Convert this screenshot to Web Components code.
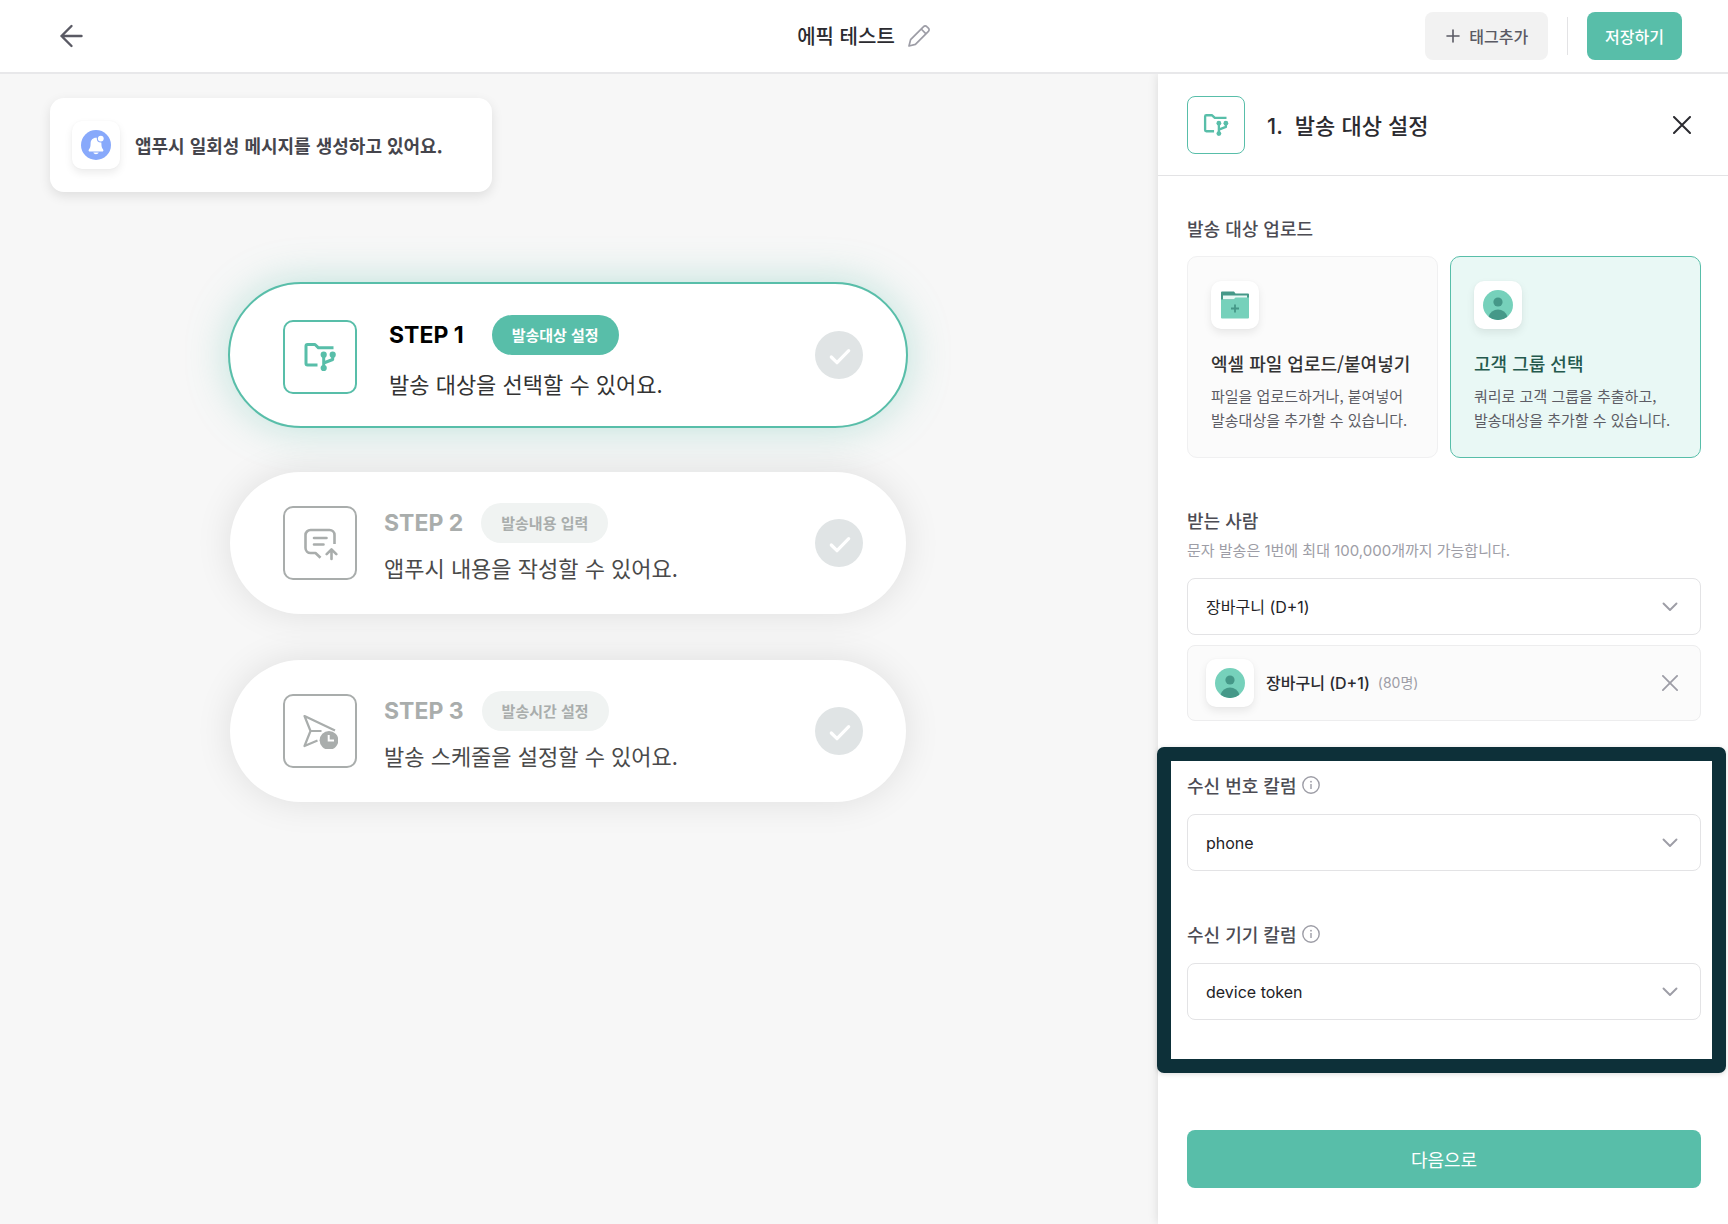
<!DOCTYPE html>
<html lang="ko">
<head>
<meta charset="utf-8">
<title>에픽 테스트</title>
<style>
  html, body {
    margin: 0;
    height: 100%;
  }
  body {
    --green: #58bea9;
    --green-dark: #24594d;
    --line: #e3e3e5;
    --ko: "Noto Sans CJK KR", "Noto Sans", sans-serif;
    --mix: Inter, "Noto Sans CJK KR", sans-serif;
    font-family: var(--ko);
    color: #2b2b30;
    background: #f7f7f7;
  }
</style>
</head>
<body>
<campaign-page></campaign-page>

<script>
const icons = {
  back: ["0 0 28 28", `<path d="M23.500 14H3.500M13.500 4 3.500 14l10 10" fill="none" stroke="currentColor" stroke-width="2.400" stroke-linecap="round" stroke-linejoin="round"/>`],
  pencil: ["0 0 24 24", `<g fill="none" stroke="currentColor" stroke-width="1.700" stroke-linejoin="round"><path d="M2 22 3.600 15.600 16.600 2.600a2.200 2.200 0 0 1 3.200 0l1.600 1.600a2.200 2.200 0 0 1 0 3.200L8.400 20.400Z"/><path d="m14.200 5 4.800 4.800"/></g>`],
  plus: ["0 0 14 14", `<path d="M7 1v12M1 7h12" stroke="currentColor" stroke-width="1.600" stroke-linecap="round"/>`],
  close: ["0 0 18 18", `<path d="m1 1 16 16M17 1 1 17" stroke="currentColor" stroke-width="2" stroke-linecap="round"/>`],
  chevron: ["0 0 16 16", `<path d="m1.500 4.500 6.500 6.500 6.500-6.500" fill="none" stroke="currentColor" stroke-width="1.900" stroke-linecap="round" stroke-linejoin="round"/>`],
  info: ["0 0 18 18", `<circle cx="9" cy="9" r="8.200" fill="none" stroke="currentColor" stroke-width="1.400"/><path d="M9 8v5" stroke="currentColor" stroke-width="1.400"/><circle cx="9" cy="5.700" r=".9" fill="currentColor"/>`],
  target: ["0 0 36 36", `<g fill="none" stroke="currentColor" stroke-width="3" stroke-linejoin="round"><path d="M15.500 26H5.500A1.500 1.500 0 0 1 4 24.500V7a1.500 1.500 0 0 1 1.500-1.500H13l3.500 3.300h15" stroke-linecap="butt"/><path d="M21.700 15.700V29M30.700 15.700v4.800l-9 3.500"/></g><g fill="currentColor"><circle cx="21.700" cy="15.700" r="3.100"/><circle cx="30.700" cy="15.700" r="3.100"/><circle cx="21.700" cy="29" r="3.100"/></g>`],
  message: ["0 0 36 36", `<g fill="none" stroke="currentColor" stroke-width="2.600" stroke-linecap="round" stroke-linejoin="round"><path d="M32.500 19V10a5 5 0 0 0-5-5h-19a5 5 0 0 0-5 5v13a5 5 0 0 0 5 5h5l5 4.800" stroke-linecap="butt"/><path d="M12 13h12.500M12 19.500h9.500M29.500 34V25M24.700 29.200l4.800-4.800 4.800 4.800"/></g>`],
  schedule: ["0 0 36 36", `<path d="M15.500 27.500 2.500 33l6-15-6-15L33 17.500M8.500 18h11" fill="none" stroke="currentColor" stroke-width="2.200" stroke-linejoin="round"/><circle cx="27" cy="27.300" r="9.400" fill="currentColor"/><path d="M26.700 22v5.600H32" fill="none" stroke="#fff" stroke-width="2"/>`],
  check: ["0 0 48 48", `<circle cx="24" cy="24" r="24" fill="#e0e4e5"/><path d="m16.300 26 5.700 5.700 11.700-12" fill="none" stroke="#fff" stroke-width="3.200" stroke-linecap="round" stroke-linejoin="round"/>`],
  bell: ["0 0 30 30", `<circle cx="15" cy="15" r="15" fill="#88a9fb"/><path d="M15 7.700c-3.200 0-5.400 2.300-5.400 5.600 0 3-.4 4.600-1.700 6.200-.8 1 0 2.100 1 2.100h12.200c1 0 1.800-1.100 1-2.100-1.300-1.600-1.700-3.200-1.700-6.200 0-3.300-2.200-5.600-5.400-5.600Z" fill="#fff"/><path d="M12.300 22.500h5.400c-.5 1.100-1.500 1.700-2.700 1.700s-2.200-.6-2.700-1.700Z" fill="#fff"/><circle cx="19.800" cy="8.600" r="4" fill="#88a9fb"/><circle cx="19.800" cy="8.600" r="2.900" fill="#fff"/>`],
  folder: ["0 0 28 28", `<path d="M0 1.500A1 1 0 0 1 1 .5h12l1.500 2H27a1 1 0 0 1 1 1V9H0Z" fill="#459888"/><path d="M2 4.500h24v4H2Z" fill="#e9f8f5"/><path d="M0 8.500h12.500l2-2H28v20a1 1 0 0 1-1 1H1a1 1 0 0 1-1-1Z" fill="#76d1bb"/><path d="M14 13.500v8M10 17.500h8" stroke="#459888" stroke-width="1.800"/>`],
  person: ["0 0 30 30", `<circle cx="15" cy="15" r="15" fill="#76d1bb"/><circle cx="15" cy="12" r="4.600" fill="#459888"/><path d="M5.600 26.700a9.700 9.700 0 0 1 18.800 0A15 15 0 0 1 5.600 26.700Z" fill="#459888"/>`],
};

function define(name, markup) {
  customElements.define(name, class extends HTMLElement {
    constructor() {
      super();
      this.attachShadow({ mode: "open" });
    }

    connectedCallback() {
      if (this.shadowRoot.childNodes.length) return;
      this.shadowRoot.innerHTML = "<style>* { box-sizing: border-box; } button { font: inherit; color: inherit; margin: 0; border: 0; cursor: pointer; }</style>" + markup(this);
    }
  });
}

const attr = (el, name) => el.getAttribute(name) || "";

// <ui-icon name="" size="">
define("ui-icon", (el) => {
  const [viewBox, body] = icons[attr(el, "name")];
  const size = attr(el, "size") || 24;
  return `
    <style>
      :host { display: inline-flex; flex: none; }
    </style>
    <svg viewBox="${viewBox}" width="${size}" height="${size}" aria-hidden="true">${body}</svg>`;
});

// white raised square around a coloured icon
define("icon-tile", (el) => `
  <style>
    :host {
      display: inline-flex;
      flex: none;
      align-items: center;
      justify-content: center;
      width: 48px;
      height: 48px;
      border-radius: 10px;
      background: #fff;
      box-shadow: 0 4px 8px rgba(0, 0, 0, 0.08), 0 0 2px rgba(0, 0, 0, 0.04);
    }
  </style>
  <ui-icon name="${attr(el, "name")}" size="${attr(el, "size") || 30}"></ui-icon>`);

define("page-header", () => `
  <style>
    :host {
      display: grid;
      grid-template-columns: 1fr auto 1fr;
      align-items: center;
      height: 74px;
      padding: 0 46px;
      background: #fff;
      border-bottom: 2px solid #e8e8ea;
      box-sizing: border-box;
      position: relative;
      z-index: 1;
    }
    button { display: inline-flex; align-items: center; background: none; padding: 0; }
    .back { justify-self: start; padding: 12px; color: #5a5a64; }
    .title { display: flex; align-items: center; gap: 12px; }
    h1 { margin: 0; font-size: 20px; line-height: 28px; font-weight: 500; }
    .edit { color: #9d9da6; }
    .actions { display: flex; align-items: center; gap: 19px; justify-self: end; }
    .actions button {
      height: 48px;
      border-radius: 8px;
      font-size: 16px;
      font-weight: 500;
      padding: 0 18px;
    }
    .actions .tag { background: #f2f2f2; color: #5a5a64; gap: 9px; padding: 0 20px 0 21px; }
    .actions .save { background: var(--green); color: #fff; }
    .rule { width: 1px; height: 38px; background: var(--line); }
  </style>
  <button class="back" aria-label="뒤로"><ui-icon name="back" size="28"></ui-icon></button>
  <div class="title">
    <h1><slot></slot></h1>
    <button class="edit" aria-label="이름 수정"><ui-icon name="pencil" size="24"></ui-icon></button>
  </div>
  <div class="actions">
    <button class="tag"><ui-icon name="plus" size="14"></ui-icon>태그추가</button>
    <span class="rule"></span>
    <button class="save">저장하기</button>
  </div>`);

define("notice-card", () => `
  <style>
    :host {
      display: flex;
      align-items: center;
      gap: 15px;
      width: 442px;
      max-width: 100%;
      padding: 23px 22px;
      border-radius: 14px;
      background: #fff;
      box-shadow: 0 4px 12px rgba(0, 0, 0, 0.1);
      box-sizing: border-box;
      font-size: 18px;
      line-height: 28px;
      font-weight: 700;
      color: #45454c;
    }
  </style>
  <icon-tile name="bell"></icon-tile>
  <span><slot></slot></span>`);

define("step-card", (el) => `
  <style>
    :host {
      display: flex;
      align-items: center;
      justify-content: space-between;
      height: 142px;
      padding: 0 43px 0 53px;
      border-radius: 71px;
      background: #fff;
      box-shadow: 0 0 36px rgba(0, 0, 0, 0.1);
      box-sizing: border-box;
      --tone: #a9adac;
    }
    .main { display: flex; align-items: center; gap: 27px; }
    .icon {
      display: flex;
      align-items: center;
      justify-content: center;
      width: 74px;
      height: 74px;
      border: 2px solid var(--tone);
      border-radius: 10px;
      color: var(--tone);
    }
    .body { display: grid; gap: 8px; }
    .head { display: flex; align-items: center; gap: 18px; }
    h2 { margin: 0; font: 700 23px/32px Inter, sans-serif; color: var(--tone); }
    .badge {
      padding: 0 20px;
      border-radius: 20px;
      background: #f0f3f2;
      color: var(--tone);
      font-size: 15px;
      line-height: 40px;
      font-weight: 700;
    }
    p { margin: 0; font-size: 22px; line-height: 32px; color: #4a4a4a; }
    :host([active]) {
      --tone: var(--green);
      outline: 2px solid var(--green);
      box-shadow: 0 0 44px rgba(88, 190, 169, 0.4);
    }
    :host([active]) .main { gap: 32px; padding-top: 4px; }
    :host([active]) .body { gap: 12px; }
    :host([active]) .head { gap: 28px; }
    :host([active]) h2 { color: #000; }
    :host([active]) .badge { background: var(--green); color: #fff; }
    :host([active]) p { color: #333; }
  </style>
  <div class="main">
    <span class="icon"><ui-icon name="${attr(el, "icon")}" size="36"></ui-icon></span>
    <div class="body">
      <div class="head">
        <h2>${attr(el, "step")}</h2>
        <span class="badge">${attr(el, "badge")}</span>
      </div>
      <p><slot></slot></p>
    </div>
  </div>
  <ui-icon name="check" size="48"></ui-icon>`);

define("panel-header", () => `
  <style>
    :host {
      display: flex;
      align-items: center;
      height: 102px;
      padding: 0 37px 0 29px;
      border-bottom: 1px solid var(--line);
      box-sizing: border-box;
    }
    .icon {
      display: flex;
      align-items: center;
      justify-content: center;
      width: 58px;
      height: 58px;
      border: 1px solid var(--green);
      border-radius: 8px;
      color: var(--green);
    }
    h2 {
      display: flex;
      align-items: baseline;
      gap: 12px;
      flex: 1;
      margin: 0 0 0 22px;
      font: 500 22px/32px var(--ko);
    }
    .no { font-family: var(--mix); }
    button { display: flex; padding: 0; background: none; }
  </style>
  <span class="icon"><ui-icon name="target" size="28"></ui-icon></span>
  <h2><span class="no">1.</span><slot></slot></h2>
  <button aria-label="닫기"><ui-icon name="close" size="18"></ui-icon></button>`);

define("choice-card", (el) => `
  <style>
    :host { display: grid; }
    button {
      display: flex;
      flex-direction: column;
      align-items: flex-start;
      min-height: 202px;
      padding: 24px 8px 22px 23px;
      border: 1px solid #f0f0f1;
      border-radius: 10px;
      background: #fbfbfb;
      text-align: left;
    }
    strong { margin-top: 20px; font-size: 18px; line-height: 28px; font-weight: 500; color: #333; }
    .text { margin-top: 7px; font-size: 15px; line-height: 24px; color: #5d5d65; }
    :host([selected]) button { border-color: var(--green); background: #e9f8f5; }
    :host([selected]) strong { color: var(--green-dark); }
  </style>
  <button aria-pressed="${el.hasAttribute("selected")}">
    <icon-tile name="${attr(el, "icon")}" size="${attr(el, "size")}"></icon-tile>
    <strong>${attr(el, "heading")}</strong>
    <span class="text"><slot></slot></span>
  </button>`);

define("select-field", (el) => `
  <style>
    :host { display: block; }
    .label { display: flex; align-items: center; gap: 6px; }
    label { font-size: 18px; line-height: 28px; font-weight: 500; color: #4c4c54; }
    .label ui-icon { color: #9d9da6; }
    .hint { margin: 5px 0 0; font-size: 15px; line-height: 24px; color: #9d9da6; font-family: var(--mix); }
    .control { display: grid; align-items: center; margin-top: 15px; }
    .control > * { grid-area: 1 / 1; }
    select {
      appearance: none;
      width: 100%;
      height: 57px;
      margin: 0;
      padding: 0 48px 0 18px;
      border: 1px solid var(--line);
      border-radius: 8px;
      background: #fff;
      font: 400 16px/24px var(--mix);
      color: #222226;
    }
    .control ui-icon { justify-self: end; margin-right: 23px; color: #9d9da6; pointer-events: none; }
  </style>
  <div class="label">
    <label for="field">${attr(el, "label")}</label>
    ${el.hasAttribute("info") ? `<ui-icon name="info" size="18"></ui-icon>` : ""}
  </div>
  ${el.hasAttribute("hint") ? `<p class="hint">${attr(el, "hint")}</p>` : ""}
  <div class="control">
    <select id="field"><option>${attr(el, "value")}</option></select>
    <ui-icon name="chevron" size="16"></ui-icon>
  </div>`);

define("group-row", (el) => `
  <style>
    :host {
      display: flex;
      align-items: center;
      height: 76px;
      padding: 0 22px 0 18px;
      border: 1px solid #ededee;
      border-radius: 8px;
      background: #fbfbfb;
      box-sizing: border-box;
    }
    .name { margin-left: 12px; font: 500 16px/24px var(--mix); }
    .count { flex: 1; margin-left: 8px; font: 400 14px/24px var(--mix); color: #9d9da6; }
    button { display: flex; padding: 0; background: none; color: #9d9da6; }
  </style>
  <icon-tile name="person"></icon-tile>
  <span class="name"><slot></slot></span>
  <span class="count">${attr(el, "count")}</span>
  <button aria-label="삭제"><ui-icon name="close" size="16"></ui-icon></button>`);

// thick dark frame that runs out to the edges of the panel
define("focus-frame", () => `
  <style>
    :host {
      display: grid;
      gap: 49px;
      margin: 26px -25px 0 -30px;
      padding: 10px 11px 39px 16px;
      border: 14px solid #0d3039;
      border-radius: 7px;
      background: #fff;
      box-shadow: 0 1px 5px rgba(0, 0, 0, 0.15);
    }
  </style>
  <slot></slot>`);

define("target-panel", () => `
  <style>
    :host {
      display: flex;
      flex-direction: column;
      background: #fff;
      box-shadow: 0 0 10px rgba(0, 0, 0, 0.12);
    }
    .content { flex: 1; padding: 38px 27px 0 29px; }
    h3 { margin: 0 0 14px; font-size: 18px; line-height: 28px; font-weight: 500; color: #4c4c54; }
    .choices { display: grid; grid-template-columns: 1fr 1fr; gap: 12px; margin-bottom: 48px; }
    group-row { margin-top: 10px; }
    footer { padding: 36px 27px 36px 29px; }
    footer button {
      display: block;
      width: 100%;
      height: 58px;
      border-radius: 8px;
      background: var(--green);
      color: #fff;
      font-size: 18px;
    }
  </style>
  <panel-header>발송 대상 설정</panel-header>
  <div class="content">
    <h3>발송 대상 업로드</h3>
    <div class="choices">
      <choice-card icon="folder" size="28" heading="엑셀 파일 업로드/붙여넣기">파일을 업로드하거나, 붙여넣어<br>발송대상을 추가할 수 있습니다.</choice-card>
      <choice-card icon="person" size="30" heading="고객 그룹 선택" selected>쿼리로 고객 그룹을 추출하고,<br>발송대상을 추가할 수 있습니다.</choice-card>
    </div>
    <select-field label="받는 사람" hint="문자 발송은 1번에 최대 100,000개까지 가능합니다." value="장바구니 (D+1)"></select-field>
    <group-row count="(80명)">장바구니 (D+1)</group-row>
    <focus-frame>
      <select-field label="수신 번호 칼럼" value="phone" info></select-field>
      <select-field label="수신 기기 칼럼" value="device token" info></select-field>
    </focus-frame>
  </div>
  <footer><button>다음으로</button></footer>`);

define("campaign-page", () => `
  <style>
    :host { display: flex; flex-direction: column; min-height: 100%; }
    .layout { display: grid; grid-template-columns: minmax(0, 1fr) 570px; flex: 1; }
    main { display: flex; flex-direction: column; padding: 24px 72px 24px 50px; }
    .steps {
      display: grid;
      gap: 46px;
      align-self: center;
      width: 100%;
      max-width: 676px;
      margin-top: 92px;
    }
  </style>
  <page-header>에픽 테스트</page-header>
  <div class="layout">
    <main>
      <notice-card>앱푸시 일회성 메시지를 생성하고 있어요.</notice-card>
      <div class="steps">
        <step-card icon="target" step="STEP 1" badge="발송대상 설정" active>발송 대상을 선택할 수 있어요.</step-card>
        <step-card icon="message" step="STEP 2" badge="발송내용 입력">앱푸시 내용을 작성할 수 있어요.</step-card>
        <step-card icon="schedule" step="STEP 3" badge="발송시간 설정">발송 스케줄을 설정할 수 있어요.</step-card>
      </div>
    </main>
    <target-panel></target-panel>
  </div>`);
</script>
</body>
</html>
